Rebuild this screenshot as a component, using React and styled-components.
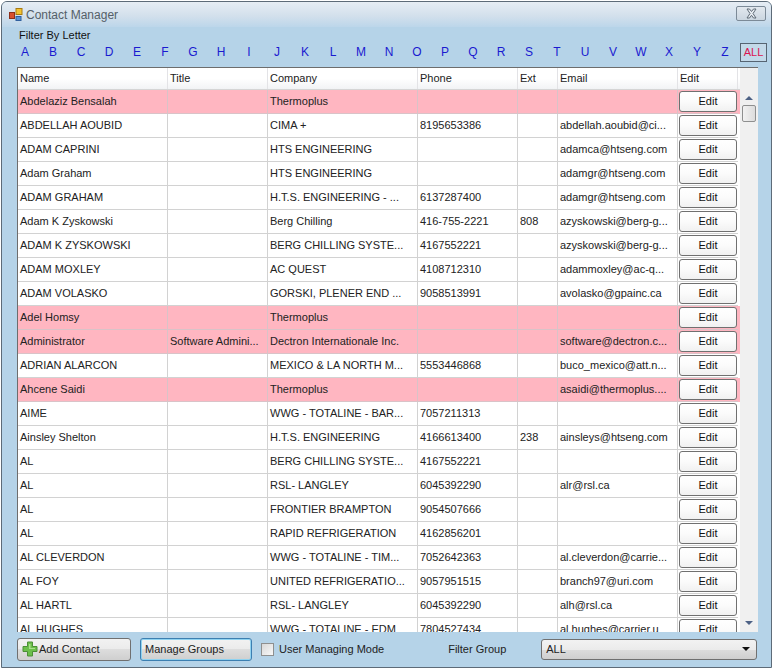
import React from 'react';
import styled, { createGlobalStyle } from 'styled-components';

const GlobalStyle = createGlobalStyle`
	html, body {
		margin: 0;
		padding: 0;
		background: #ffffff;
	}
	* {
		box-sizing: border-box;
	}
`;

// the whole aero style window
const Window = styled.div`
	width: 771px;
	height: 667px;
	margin: 1px 0 0 1px;
	display: flex;
	flex-direction: column;
	border: 1px solid #5d6b78;
	border-radius: 6px 6px 0 0;
	background: #b5d3e8;
	font-family: 'Liberation Sans', Arial, sans-serif;
	font-size: 11px;
	color: #1a1a1a;
	overflow: hidden;
`;

const TitleBar = styled.div`
	height: 25px;
	flex: none;
	display: flex;
	align-items: center;
	padding: 0 5px 0 6px;
	background: linear-gradient(to bottom, #e6edf4 0%, #d3e0ec 55%, #bcd6ea 100%);
`;

const TitleText = styled.span`
	margin-left: 2px;
	font-size: 12px;
	color: #555f68;
`;

const CloseButton = styled.div`
	margin-left: auto;
	width: 30px;
	height: 15px;
	margin-top: -3px;
	display: flex;
	align-items: center;
	justify-content: center;
	border: 1px solid #7c8a97;
	border-radius: 2px;
	background: linear-gradient(to bottom, #e2e8ee, #cbd6e0);
`;

const Body = styled.div`
	flex: 1;
	min-height: 0;
	display: flex;
	flex-direction: column;
	padding: 0 3px 0 15px;
`;

const FilterLabel = styled.div`
	height: 14px;
	line-height: 14px;
	padding-left: 2px;
	margin-top: 1px;
	color: #111111;
`;

const LetterBar = styled.div`
	height: 20px;
	display: flex;
	align-items: center;
	margin-left: -6px;
`;

const Letter = styled.span`
	width: 28px;
	text-align: center;
	color: #1a1ad0;
	font-size: 12px;
`;

const AllLetter = styled.span`
	width: 27px;
	height: 19px;
	margin-left: 1px;
	line-height: 17px;
	text-align: center;
	color: #dc1450;
	border: 1px solid #566472;
	background: #c3d9e9;
`;

const Grid = styled.div`
	width: 741px;
	height: 565px;
	flex: none;
	margin-top: 5px;
	display: flex;
	background: #f0f0f0;
	border-top: 1px solid #6d6d6d;
	border-left: 1px solid #6d6d6d;
	overflow: hidden;
`;

const Table = styled.div`
	width: 722px;
	flex: none;
	display: flex;
	flex-direction: column;
`;

const columns = '150px 100px 150px 100px 40px 120px 60px';

const HeaderRow = styled.div`
	height: 22px;
	flex: none;
	display: grid;
	grid-template-columns: ${columns};
	background: linear-gradient(to bottom, #ffffff 0%, #ffffff 50%, #f2f3f5 100%);
	border-bottom: 1px solid #d5d5d5;
`;

const HeaderCell = styled.div`
	padding-left: 2px;
	line-height: 21px;
	border-right: 1px solid #e3e3e6;
	color: #222222;
`;

const Row = styled.div`
	height: 24px;
	flex: none;
	display: grid;
	grid-template-columns: ${columns};
	background: ${({ $pink }) => ($pink ? '#ffb6c1' : '#ffffff')};
`;

const Cell = styled.div`
	padding-left: 2px;
	line-height: 23px;
	white-space: nowrap;
	overflow: hidden;
	border-right: 1px solid #a0a0a0;
	border-bottom: 1px solid #a0a0a0;
	border-color: ${({ $pink }) => ($pink ? '#d9c3c8' : '#d2d2d2')};
	color: #222222;
`;

const EditCell = styled.div`
	padding: 1px 0 0 1px;
	border-bottom: 1px solid ${({ $pink }) => ($pink ? '#d9c3c8' : '#d2d2d2')};
`;

const EditButton = styled.div`
	width: 58px;
	height: 21px;
	line-height: 19px;
	text-align: center;
	border: 1px solid #707070;
	border-radius: 3px;
	background: linear-gradient(to bottom, #ffffff 0%, #fbfbfb 50%, #f1f1f1 100%);
	color: #111111;
`;

const Scrollbar = styled.div`
	width: 18px;
	flex: none;
	display: flex;
	flex-direction: column;
	align-items: center;
	background: #f0f0f0;
	margin-top: 22px;
`;

const Arrow = styled.div`
	width: 0;
	height: 0;
	margin-top: ${({ $down }) => ($down ? 'auto' : '6px')};
	margin-bottom: ${({ $down }) => ($down ? '7px' : '0')};
	border-left: 4px solid transparent;
	border-right: 4px solid transparent;
	border-bottom: ${({ $down }) => ($down ? '0' : '4px solid #4d6185')};
	border-top: ${({ $down }) => ($down ? '4px solid #4d6185' : '0')};
`;

const Thumb = styled.div`
	width: 14px;
	height: 17px;
	margin-top: 5px;
	border: 1px solid #8e8f8f;
	border-radius: 2px;
	background: linear-gradient(to right, #f2f2f2, #dcdcdc);
`;

const Footer = styled.div`
	flex: 1;
	display: flex;
	align-items: center;
	padding-bottom: 1px;
	white-space: nowrap;
	color: #222222;
`;

const FooterButton = styled.div`
	width: ${({ $width }) => $width}px;
	height: 23px;
	display: flex;
	align-items: center;
	gap: 1px;
	padding-left: ${({ $pad }) => $pad}px;
	border: 1px solid ${({ $focus }) => ($focus ? '#3c7fb1' : '#707070')};
	box-shadow: ${({ $focus }) => ($focus ? 'inset 0 0 0 1px #8fd2f0' : 'none')};
	border-radius: 3px;
	background: linear-gradient(to bottom, #f2f2f2 0%, #ebebeb 50%, #dddddd 50%, #cfcfcf 100%);
	margin-left: ${({ $left }) => $left || 0}px;
`;

const Check = styled.div`
	width: 13px;
	height: 13px;
	margin-left: 9px;
	flex: none;
	border: 1px solid #8e8f8f;
	background: linear-gradient(135deg, #d8d8d8, #f8f8f8);
`;

const CheckLabel = styled.span`
	margin-left: 5px;
`;

const GroupLabel = styled.span`
	margin-left: 64px;
`;

const GroupSelect = styled.div`
	width: 216px;
	height: 21px;
	margin-left: 35px;
	display: flex;
	align-items: center;
	justify-content: space-between;
	padding: 0 6px 0 4px;
	border: 1px solid #707070;
	border-radius: 3px;
	background: linear-gradient(to bottom, #f2f2f2 0%, #ebebeb 50%, #dddddd 50%, #cfcfcf 100%);
`;

const SelectArrow = styled.div`
	width: 0;
	height: 0;
	border-left: 4px solid transparent;
	border-right: 4px solid transparent;
	border-top: 4px solid #111111;
`;

const letters = 'ABCDEFGHIJKLMNOPQRSTUVWXYZ'.split('');
const headers = ['Name', 'Title', 'Company', 'Phone', 'Ext', 'Email', 'Edit'];

// name, title, company, phone, ext, email, pink
const contacts = [
	['Abdelaziz Bensalah', '', 'Thermoplus', '', '', '', true],
	['ABDELLAH AOUBID', '', 'CIMA +', '8195653386', '', 'abdellah.aoubid@ci...'],
	['ADAM CAPRINI', '', 'HTS ENGINEERING', '', '', 'adamca@htseng.com'],
	['Adam Graham', '', 'HTS ENGINEERING', '', '', 'adamgr@htseng.com'],
	['ADAM GRAHAM', '', 'H.T.S. ENGINEERING - ...', '6137287400', '', 'adamgr@htseng.com'],
	['Adam K Zyskowski', '', 'Berg Chilling', '416-755-2221', '808', 'azyskowski@berg-g...'],
	['ADAM K ZYSKOWSKI', '', 'BERG CHILLING SYSTE...', '4167552221', '', 'azyskowski@berg-g...'],
	['ADAM MOXLEY', '', 'AC QUEST', '4108712310', '', 'adammoxley@ac-q...'],
	['ADAM VOLASKO', '', 'GORSKI, PLENER END ...', '9058513991', '', 'avolasko@gpainc.ca'],
	['Adel Homsy', '', 'Thermoplus', '', '', '', true],
	['Administrator', 'Software Admini...', 'Dectron Internationale Inc.', '', '', 'software@dectron.c...', true],
	['ADRIAN ALARCON', '', 'MEXICO & LA NORTH M...', '5553446868', '', 'buco_mexico@att.n...'],
	['Ahcene Saidi', '', 'Thermoplus', '', '', 'asaidi@thermoplus....', true],
	['AIME', '', 'WWG - TOTALINE - BAR...', '7057211313', '', ''],
	['Ainsley Shelton', '', 'H.T.S. ENGINEERING', '4166613400', '238', 'ainsleys@htseng.com'],
	['AL', '', 'BERG CHILLING SYSTE...', '4167552221', '', ''],
	['AL', '', 'RSL- LANGLEY', '6045392290', '', 'alr@rsl.ca'],
	['AL', '', 'FRONTIER BRAMPTON', '9054507666', '', ''],
	['AL', '', 'RAPID REFRIGERATION', '4162856201', '', ''],
	['AL CLEVERDON', '', 'WWG - TOTALINE - TIM...', '7052642363', '', 'al.cleverdon@carrie...'],
	['AL FOY', '', 'UNITED REFRIGERATIO...', '9057951515', '', 'branch97@uri.com'],
	['AL HARTL', '', 'RSL- LANGLEY', '6045392290', '', 'alh@rsl.ca'],
	['AL HUGHES', '', 'WWG - TOTALINE - EDM', '7804527434', '', 'al.hughes@carrier.u'],
];

const AppIcon = () => (
	<svg width="16" height="16" viewBox="0 0 16 16">
		<rect x="8" y="1.5" width="6" height="6" fill="#f2c230" stroke="#a97a10" />
		<rect x="1.5" y="5.5" width="5" height="6" fill="#d9502e" stroke="#8e2f1a" />
		<rect x="8" y="9.5" width="5" height="4" fill="#5a93d6" stroke="#2f5f9e" />
	</svg>
);

const CloseIcon = () => (
	<svg width="13" height="11" viewBox="0 0 13 11">
		<path d="M2 1h2.5l2 2.5 2-2.5H11L8 5.5l3 4.5H8.5l-2-2.7-2 2.7H2l3-4.5z" fill="#e8edf2" stroke="#5f6b76" strokeWidth="1" />
	</svg>
);

const PlusIcon = () => (
	<svg width="16" height="16" viewBox="0 0 16 16">
		<path d="M5.5 1h5v4.5H15v5h-4.5V15h-5v-4.5H1v-5h4.5z" fill="#6cbf4b" stroke="#4b8f35" />
		<path d="M7 3h1.5v4H13v1H7z" fill="#a8e08c" />
	</svg>
);

const App = () => {
	return (
		<Window>
			<GlobalStyle />
			<TitleBar>
				<AppIcon />
				<TitleText>Contact Manager</TitleText>
				<CloseButton>
					<CloseIcon />
				</CloseButton>
			</TitleBar>
			<Body>
				<FilterLabel>Filter By Letter</FilterLabel>
				<LetterBar>
					{letters.map((letter) => (
						<Letter key={letter}>{letter}</Letter>
					))}
					<AllLetter>ALL</AllLetter>
				</LetterBar>
				<Grid>
					<Table>
						<HeaderRow>
							{headers.map((header) => (
								<HeaderCell key={header}>{header}</HeaderCell>
							))}
						</HeaderRow>
						{contacts.map((contact, index) => {
							const pink = contact[6];
							return (
								<Row key={index} $pink={pink}>
									{contact.slice(0, 6).map((value, cellIndex) => (
										<Cell key={cellIndex} $pink={pink}>
											{value}
										</Cell>
									))}
									<EditCell $pink={pink}>
										<EditButton>Edit</EditButton>
									</EditCell>
								</Row>
							);
						})}
					</Table>
					<Scrollbar>
						<Arrow />
						<Thumb />
						<Arrow $down />
					</Scrollbar>
				</Grid>
				<Footer>
					<FooterButton $width={114} $pad={4}>
						<PlusIcon />
						Add Contact
					</FooterButton>
					<FooterButton $width={112} $pad={4} $left={9} $focus>
						Manage Groups
					</FooterButton>
					<Check />
					<CheckLabel>User Managing Mode</CheckLabel>
					<GroupLabel>Filter Group</GroupLabel>
					<GroupSelect>
						ALL
						<SelectArrow />
					</GroupSelect>
				</Footer>
			</Body>
		</Window>
	);
};

export default App;
